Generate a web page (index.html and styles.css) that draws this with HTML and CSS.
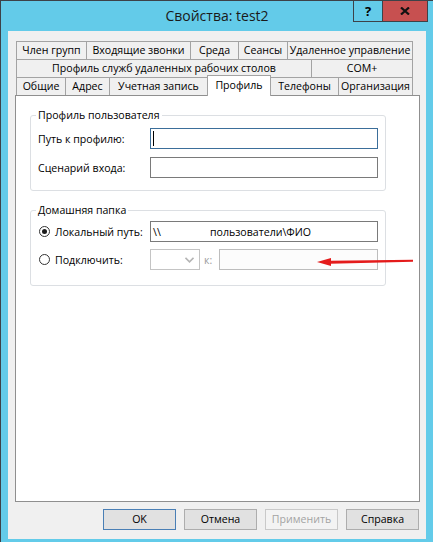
FILE: index.html
```html
<!DOCTYPE html>
<html lang="ru">
<head>
  <meta charset="UTF-8">
  <title>Свойства: test2</title>
  <link rel="stylesheet" href="styles.css">
</head>
<body>
  <div class="window">
    <div class="titlebar">
      <div class="title">Свойства: test2</div>
      <div class="caption-buttons">
        <span class="cap-btn help">?</span>
        <span class="cap-btn close">
          <svg width="10" height="8" viewBox="0 0 10 8"><path d="M1 0.5 L9 7.5 M9 0.5 L1 7.5" stroke="#111" stroke-width="2.2"/></svg>
        </span>
      </div>
    </div>

    <div class="client">
      <div class="tabs">
        <div class="tab-row">
          <div class="tab" style="width:71px">Член групп</div>
          <div class="tab" style="width:105px">Входящие звонки</div>
          <div class="tab" style="width:49px">Среда</div>
          <div class="tab" style="width:50px">Сеансы</div>
          <div class="tab" style="width:126px">Удаленное управление</div>
        </div>
        <div class="tab-row">
          <div class="tab" style="width:296px">Профиль служб удаленных рабочих столов</div>
          <div class="tab" style="width:102px">COM+</div>
        </div>
        <div class="tab-row">
          <div class="tab" style="width:50px">Общие</div>
          <div class="tab" style="width:45px">Адрес</div>
          <div class="tab" style="width:99px">Учетная запись</div>
          <div class="tab active" style="width:64px">Профиль</div>
          <div class="tab" style="width:69px">Телефоны</div>
          <div class="tab" style="width:75px">Организация</div>
        </div>
      </div>

      <div class="panel">
        <fieldset class="group group-profile">
          <legend>Профиль пользователя</legend>
          <div class="row">
            <span class="label">Путь к профилю:</span>
            <div class="field focus"><span class="caret"></span></div>
          </div>
          <div class="row">
            <span class="label">Сценарий входа:</span>
            <div class="field"></div>
          </div>
        </fieldset>

        <fieldset class="group group-home">
          <legend>Домашняя папка</legend>
          <div class="row">
            <span class="label radio"><span class="radio-dot checked"></span>Локальный путь:</span>
            <div class="field"><span class="path-head">\\</span><span class="path-tail">пользователи\ФИО</span></div>
          </div>
          <div class="row">
            <span class="label radio"><span class="radio-dot"></span>Подключить:</span>
            <div class="combo">
              <svg width="9" height="6" viewBox="0 0 9 6"><path d="M0.5 0.8 L4.5 4.8 L8.5 0.8" fill="none" stroke="#b5b5b5" stroke-width="1.6"/></svg>
            </div>
            <span class="to">к:</span>
            <div class="field disabled"></div>
          </div>
        </fieldset>
      </div>

      <div class="buttons">
        <div class="btn default">OK</div>
        <div class="btn">Отмена</div>
        <div class="btn disabled">Применить</div>
        <div class="btn">Справка</div>
      </div>
    </div>

    <!-- pointer to the drive field -->
    <svg class="arrow" width="104" height="16" viewBox="0 0 104 16">
      <polygon points="5,10 19,6 19,14" fill="#e41b1b"/>
      <polygon points="18,8.8 101,7.8 101,9.8 18,11.8" fill="#e41b1b"/>
    </svg>
  </div>
</body>
</html>
```

FILE: styles.css
```css
body {
  margin: 0;
  font-family: "Segoe UI", "Open Sans", sans-serif;
  font-size: 10.6px;
  color: #000;
}

.window {
  position: relative;
  width: 433px;
  height: 542px;
  box-sizing: border-box;
  background-color: #63cbe9;
  border-left: 1px solid #3d4248;
  border-top: 1px solid #3d4248;
}

.titlebar {
  display: grid;
  height: 30px;
}

.title,
.caption-buttons {
  grid-area: 1 / 1;
}

.title {
  justify-self: center;
  align-self: center;
  font-size: 14px;
  line-height: 18px;
  color: #1a1a1a;
}

.caption-buttons {
  justify-self: end;
  align-self: start;
  display: flex;
  margin-right: 5px;
}

.cap-btn {
  box-sizing: border-box;
  height: 21px;
  border-left: 1px solid #3d4248;
  border-bottom: 1px solid #3d4248;
  display: flex;
  align-items: center;
  justify-content: center;
}

.help {
  width: 29px;
  font-weight: bold;
  font-size: 13px;
}

.close {
  width: 46px;
  background-color: #c75050;
  border-right: 1px solid #3d4248;
}

.client {
  box-sizing: border-box;
  margin-left: 7px;
  width: 418px;
  height: 508px;
  background-color: #f0f0f0;
  padding: 10px 6px 0 7px;
  display: flex;
  flex-direction: column;
}

.tab-row {
  display: flex;
  align-items: flex-start;
  height: 18px;
  margin-left: 1px;
}

.tab {
  box-sizing: border-box;
  height: 19px;
  border: 1px solid #a3a3a3;
  background-color: #f0f0f0;
  text-align: center;
  line-height: 17px;
  white-space: nowrap;
  margin-left: -1px;
}

.tab:first-child {
  margin-left: 0;
}

.tab.active {
  position: relative;
  z-index: 1;
  height: 21px;
  margin-top: -2px;
  border-bottom: none;
  background-color: #fff;
  line-height: 18px;
}

.panel {
  box-sizing: border-box;
  height: 407px;
  border: 1px solid #8f8f8f;
  background-color: #fff;
  padding: 12px 0 0 14px;
}

.group {
  box-sizing: border-box;
  width: 356px;
  margin: 0;
  padding: 0 7px 12px;
  border: 1px solid #dcdfe3;
  border-radius: 3px;
  min-inline-size: 0;
}

.group legend {
  padding: 0 2px;
  margin-left: -2px;
  line-height: 14px;
}

.group-home {
  margin-top: 12px;
  padding-bottom: 15px;
}

.row {
  display: flex;
  align-items: center;
  height: 21px;
}

.group-profile .row:first-of-type {
  margin-top: 6px;
}

.group-profile .row + .row {
  margin-top: 8px;
}

.group-home .row:first-of-type {
  margin-top: 4px;
}

.group-home .row + .row {
  margin-top: 7px;
}

.label {
  width: 112px;
  flex-shrink: 0;
  white-space: nowrap;
}

.radio {
  display: flex;
  align-items: center;
  gap: 5px;
  margin-left: 1px;
  width: 111px;
}

.radio-dot {
  box-sizing: border-box;
  width: 11px;
  height: 11px;
  border: 1px solid #333;
  border-radius: 50%;
  background-color: #fff;
  display: flex;
  align-items: center;
  justify-content: center;
}

.radio-dot.checked::after {
  content: "";
  width: 5px;
  height: 5px;
  border-radius: 50%;
  background-color: #1c1c1c;
}

.field {
  box-sizing: border-box;
  width: 228px;
  height: 21px;
  border: 1px solid #7a7a7a;
  background-color: #fff;
  padding: 0 2px;
  display: flex;
  align-items: center;
  white-space: nowrap;
  overflow: hidden;
}

.field.focus {
  border-color: #3b6e9a;
}

.field.disabled {
  width: 159px;
  border-color: #bdbdbd;
  background-color: #fcfcfc;
}

.caret {
  width: 1px;
  height: 15px;
  background-color: #000;
}

.path-head {
  width: 57px;
  flex-shrink: 0;
}

.combo {
  box-sizing: border-box;
  width: 50px;
  height: 21px;
  border: 1px solid #c4c4c4;
  display: flex;
  align-items: center;
  justify-content: flex-end;
  padding-right: 5px;
}

.to {
  box-sizing: border-box;
  width: 19px;
  padding-left: 4px;
  color: #9b9b9b;
}

.buttons {
  display: flex;
  justify-content: flex-end;
  gap: 8px;
  margin-top: 7px;
  padding-right: 1px;
}

.btn {
  box-sizing: border-box;
  width: 73px;
  height: 21px;
  border: 1px solid #adadad;
  background-color: #e1e1e1;
  text-align: center;
  line-height: 19px;
}

.btn.default {
  border-color: #4a7fb5;
}

.btn.disabled {
  border-color: #c9c9c9;
  background-color: #f3f3f3;
  color: #a3a3a3;
}

.arrow {
  position: absolute;
  left: 311px;
  top: 251px;
}
```
